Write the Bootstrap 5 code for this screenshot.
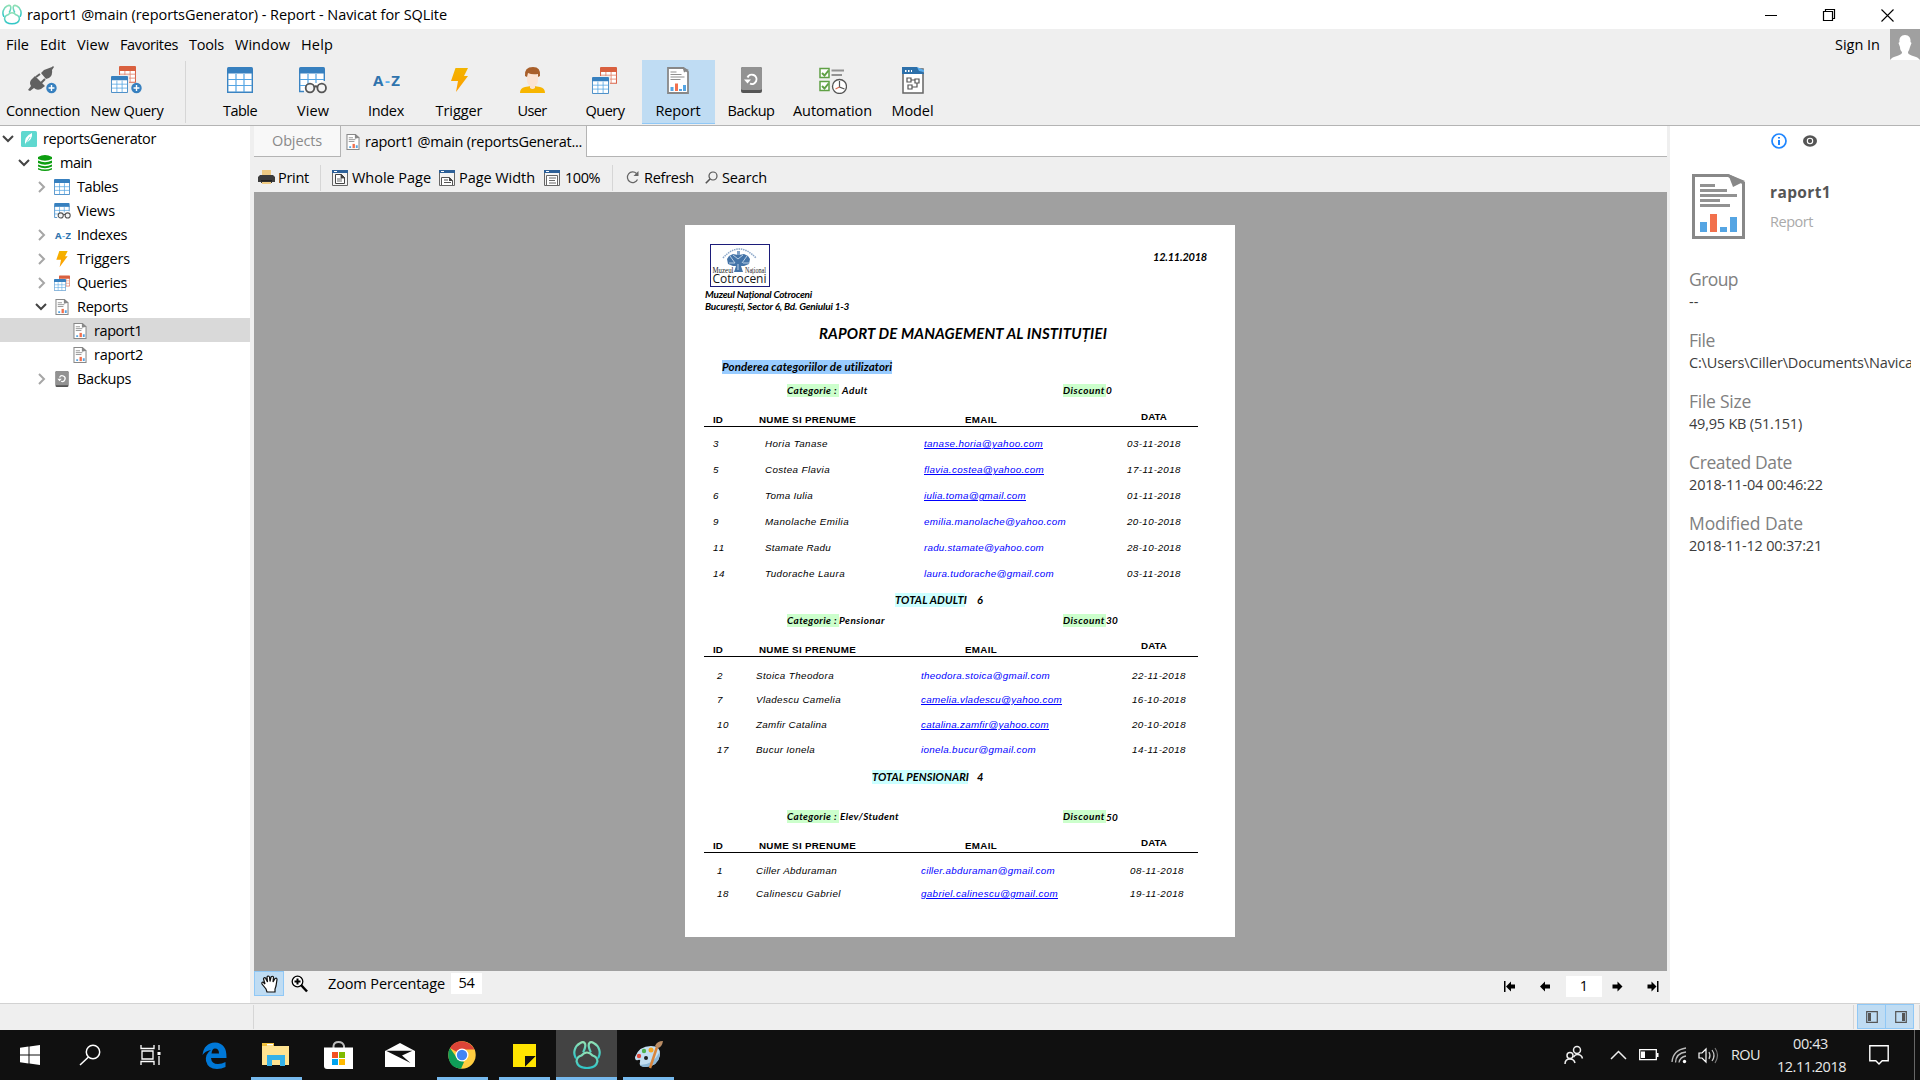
<!DOCTYPE html>
<html lang="ro">
<head>
<meta charset="utf-8">
<title>raport1 @main (reportsGenerator) - Report - Navicat for SQLite</title>
<link href="https://cdn.jsdelivr.net/npm/bootstrap@5.3.0/dist/css/bootstrap.min.css" rel="stylesheet">
<style>
body{width:1920px;height:1080px;overflow:hidden;background:#efefef;color:#000;font-family:"Open Sans","Noto Sans",sans-serif;font-size:14.5px;line-height:20px}
svg{display:block;flex:none}
[data-w]{display:inline-block;white-space:nowrap}
.title-bar{height:29px;background:#fff}
.menu-bar{height:31px}
.avatar-box{width:30px;height:31px;background:#a0a0a0}
.tool-bar{height:66px;border-bottom:1px solid #b4b4b4}
.tool{width:73px;height:64px;padding-top:4px;display:flex;flex-direction:column;align-items:center}
.tool .ico{height:32px;display:flex;align-items:center;justify-content:center;margin-left:-1px}
.tool .lbl{margin-top:5px;margin-left:-1px}
.tool.active{background:#bfdcf3;border-bottom:1px solid #90c8f6}
.vsep{width:1px;background:#d6d6d6;flex:none}
.work{height:877px}
.tree{width:250px;background:#fff;margin-right:4px;flex:none}
.tree-row{height:24px;display:grid;align-items:center}
.tree-row>*{position:relative;top:.6px}
.lv1{grid-template-columns:2px 19px 22px auto}
.lv2{grid-template-columns:18px 20px 22px auto}
.lv3{grid-template-columns:35px 19px 23px auto}
.lv4{grid-template-columns:36px 37px 21px auto}
.tree-row.sel{background:#d9d9d9}
.center-pane{width:1413px;margin-right:3px;flex:none}
.tab-strip{height:31px;background:#fff}
.tab-a{width:87px;background:#f8f8f8;color:#8a8a8a;border-right:1px solid #b4b4b4;border-bottom:1px solid #b4b4b4}
.tab-b{width:246px;background:#efefef;border-right:1px solid #b4b4b4;padding-left:5px}
.tab-rest{border-bottom:1px solid #b4b4b4}
.rep-bar{height:35px}
.canvas-area{height:779px;background:#a0a0a0;padding:33px 0 0 431px}
.view-bar{height:32px}
.view-bar .fld{background:#fff;height:21px;text-align:center}
.hand-btn{width:30px;height:25px;background:#bfdcf3;border:1px solid #90c8f6}
.info{background:#fff;padding-left:19px;overflow:hidden;width:250px}
.info .cap{font-size:17.5px;line-height:24px;height:24px;color:#808080}
.info .val{line-height:22px;height:22px;color:#3c3c3c;margin-bottom:15px;width:222px;overflow:hidden}
.status{height:27px;border-top:1px solid #d2d2d2}
.pbtn{width:29px;height:25px;background:#bfdcf3;border:1px solid #90c8f6}
/* report sheet */
.sheet{width:550px;height:712px;background:#fff;padding:19px 0 0 19px;line-height:13px;font-family:Lato,sans-serif;font-weight:700;font-style:italic;font-size:10px}
.logo-frame{width:60px;height:43px;border:1px solid #1c1c7a}
.cat{display:grid;grid-template-columns:83px 276px auto;height:13px}
.hl-g{background:#cfc;display:inline-block;width:52px;height:13px;white-space:nowrap;overflow:visible}
.hl-d{width:43px}
.hl-c{background:#cff;display:inline-block;height:14px;line-height:14px;white-space:nowrap}
.hl-b{background:#9cf;display:inline-block;height:14px;line-height:14px}
.hd{display:grid;grid-template-columns:9px 46px 206px 176px auto;width:494px;border-bottom:1px solid #000;font:700 9.8px/12px "Liberation Sans",sans-serif;height:13px;margin-top:17px}
.hd .dt{margin-top:-3px}
.rw{display:grid;grid-template-columns:9px 52px 159px 203px auto;font:italic 400 9.8px/26px "Liberation Sans",sans-serif;height:26px;color:#000}
.rw.b{grid-template-columns:13px 39px 165px 211px auto}
.rw.c{grid-template-columns:13px 39px 165px 209px auto}
.rw em{color:#00f}
.rw em.u{text-decoration:underline}
.task-bar{height:50px;background:#101010;color:#e8e8e8}
.tk{width:62px;height:50px;display:flex;align-items:center;justify-content:center;position:relative}
.tk.run::after{content:"";position:absolute;left:6px;right:5px;bottom:0;height:3px;background:#76b9ed}
.tk.cur{background:#434343;width:61px;margin-left:1px}
.tk.cur::after{left:0;right:0}
.tray{display:grid;grid-template-columns:46px 29px 32px 27px 33px 46px 92px 45px 6px;align-items:center;width:356px}
</style>
<script src="https://cdn.jsdelivr.net/npm/bootstrap@5.3.0/dist/js/bootstrap.bundle.min.js"></script>
</head>
<body>
<svg width="0" height="0" class="position-absolute">
<defs>
<linearGradient id="teal" x1="0" y1="0" x2="0" y2="1"><stop offset="0" stop-color="#8fe0b4"/><stop offset="1" stop-color="#2fc6c8"/></linearGradient>
<linearGradient id="amber" x1="0" y1="0" x2="0" y2="1"><stop offset="0" stop-color="#f2b400"/><stop offset="1" stop-color="#ff9d00"/></linearGradient>
</defs>
<symbol id="table" viewBox="0 0 26 26"><path d="M.7 5h24.6v20.2H.7z" fill="#fff" stroke="#3b84c2" stroke-width="1.4"/><path d="M9 7v18M17 7v18M1 12.500h24M1 18.500h24" stroke="#55a5e3" stroke-width="1.200" fill="none"/><path d="M0 1.500Q0 0 1.500 0h23Q26 0 26 1.500V6.500H0z" fill="#3780bf"/></symbol>
<symbol id="tableRed" viewBox="0 0 26 26"><path d="M.8 5h24.400v20H.8z" fill="#fff" stroke="#d9644a" stroke-width="1.600"/><path d="M9 7v18M17 7v18M1 12.500h24M1 18.500h24" stroke="#e58a74" stroke-width="1.400"/><path d="M0 1.500Q0 0 1.500 0h23Q26 0 26 1.500V7.500H0z" fill="#d9603f"/></symbol>
<symbol id="view" viewBox="0 0 28 27"><path d="M5 24.500H.7V5h24.600V14" fill="#fff" stroke="#3b84c2" stroke-width="1.400"/><path d="M9 7v11M17 7v9M1 12.500h24M1 18.500h6" stroke="#55a5e3" stroke-width="1.200"/><path d="M0 1.500Q0 0 1.500 0h23Q26 0 26 1.500V6.500H0z" fill="#3780bf"/><g fill="#f4f4f4" stroke="#555" stroke-width="1.800"><circle cx="11" cy="21" r="4.300"/><circle cx="22.700" cy="21" r="4.300"/><path d="M15.300 20q1.500-1.500 3 0" fill="none"/></g></symbol>
<symbol id="query" viewBox="0 0 26 27"><use href="#tableRed" x="8" y="0" width="17" height="17"/><path d="M0 9h18v18H0z" fill="#efefef"/><use href="#table" x="0" y="10" width="17" height="17"/></symbol>
<symbol id="report" viewBox="0 0 22 27"><path d="M1 1h15.500L21 5v21H1z" fill="#fff" stroke="#888" stroke-width="1.800"/><path d="M15.500 0L22 3l-5 2.500z" fill="#888"/><path d="M3.500 5h6M3.500 7.500h11M3.500 10h14M3.500 12.500h10" stroke="#909090" stroke-width="1.100"/><path d="M3.500 20h3v4h-3zM12 22h3v2h-3zM16 18h3v6h-3z" fill="#55a5e3"/><path d="M8 16.500h3V24H8z" fill="#f2704c"/></symbol>
<symbol id="reportS" viewBox="0 0 14 17"><path d="M.6.600h9L13.400 4v12.400H.6z" fill="#fff" stroke="#888" stroke-width="1.100"/><path d="M9 0v5l5-1z" fill="#888"/><path d="M2.500 4h4.500M2.500 6h7M2.500 8h6" stroke="#888" stroke-width=".9"/><path d="M3 13h2v2H3zM10 12h2v3h-2z" fill="#55a5e3"/><path d="M6.500 10.500H9V15H6.500z" fill="#f2704c"/></symbol>
<symbol id="backup" viewBox="0 0 21 26"><path d="M0 2Q0 0 2 0h17q2 0 2 2v22q0 2-2 2H2q-2 0-2-2z" fill="#555"/><path d="M0 2Q0 0 2 0h17q2 0 2 2v20q0 1-2 1H2q-2 0-2-1z" fill="#929292"/><path d="M6.500 10.500A4.700 4.700 0 1 1 9 16.700" fill="none" stroke="#fff" stroke-width="2"/><path d="M3 12.500h7l-3.500 4z" fill="#fff"/></symbol>
<symbol id="bolt" viewBox="0 0 17 24"><path d="M4.500 0H17l-4 8h4L5 24l2-11H0z" fill="url(#amber)"/></symbol>
<symbol id="down" viewBox="0 0 12 8"><path d="M1 1l5 5 5-5" fill="none" stroke="#444" stroke-width="2"/></symbol>
<symbol id="right" viewBox="0 0 12 12"><path d="M4 1l5 5-5 5" fill="none" stroke="#a6a6a6" stroke-width="2"/></symbol>
<symbol id="plus" viewBox="0 0 12 12"><circle cx="6" cy="6" r="5.700" fill="#3780bf"/><path d="M6 2.800v6.400M2.800 6h6.400" stroke="#fff" stroke-width="1.500"/></symbol>
<symbol id="paw" viewBox="0 0 28 28"><g fill="none" stroke="url(#teal)" stroke-width="2.200" stroke-linecap="round"><path d="M8.500 14.500Q3.500 16 3.600 20.500 5 27 14 27t10.400-6.500Q24.500 16 19.500 14.500 17 11.500 14 11.500T8.500 14.500z"/><path d="M2.500 16.500C0 12 1.500 5 7 2.200 11.500-.3 13 2.500 12 6.500q-.4 2-1.500 4M25.500 16.500C28 12 26.500 5 21 2.200 16.500-.3 15 2.500 16 6.500q.4 2 1.500 4"/></g></symbol>
</svg>

<header class="title-bar d-flex align-items-center">
  <svg width="20" height="21" style="margin:0 5px 0 2px"><use href="#paw" width="20" height="21"/></svg>
  <span data-w="420">raport1 @main (reportsGenerator) - Report - Navicat for SQLite</span>
  <div class="d-flex ms-auto align-items-center" style="padding-right:26px;gap:44px">
    <svg width="14" height="14"><path d="M1 7.500h12" stroke="#000"/></svg>
    <svg width="14" height="14"><path d="M1.500 3.500h9v9h-9zM3.500 3.500v-2h9v9h-2" fill="none" stroke="#000" stroke-width="1.200"/></svg>
    <svg width="14" height="14"><path d="M1.500 1.500l12 12M13.500 1.500l-12 12" stroke="#000" stroke-width="1.100"/></svg>
  </div>
</header>

<nav class="menu-bar d-flex align-items-center">
  <div class="d-flex" style="gap:11px;padding-left:6px"><span data-w="23">File</span><span data-w="26">Edit</span><span data-w="32">View</span><span data-w="58">Favorites</span><span data-w="35">Tools</span><span data-w="55">Window</span><span data-w="32">Help</span></div>
  <span class="ms-auto" data-w="45">Sign In</span>
  <div class="avatar-box" style="margin-left:10px"><svg width="30" height="31"><path d="M15 6c4 0 6 3 5.500 7l1 1-1.500 4q-1 4-2 5c0 2 1 2.500 5 4q5 1 7 4H0q2-3 7-4c4-1.500 5-2 5-4-1-1-2-2-2-5l-1.500-4 1-1C9 9 11 6 15 6z" fill="#fff"/></svg></div>
</nav>

<section class="tool-bar d-flex">
  <div class="tool" style="width:87px"><div class="ico"><svg width="32" height="28" viewBox="0 0 32 28"><g fill="#606060"><path d="M17 4l8-3 1-1 1 1-2 3q1 5-3 8l-3 1-5-6z"/><path d="M4 14l4-4 10 10-4 3q-4 2-7-1l-4 3-2-1 3-4q-2-3 0-6z"/></g><path d="M9 11l4-3M14 17l4-4" stroke="#606060" stroke-width="2"/><use href="#plus" x="19" y="16" width="11" height="12"/></svg></div><span class="lbl" data-w="74">Connection</span></div>
  <div class="tool" style="width:81px"><div class="ico"><svg width="32" height="28"><use href="#query" width="26" height="27"/><use href="#plus" x="20" y="16" width="11" height="12"/></svg></div><span class="lbl" data-w="73">New Query</span></div>
  <div class="vsep" style="margin:1px 18px 2px 17px"></div>
  <div class="tool"><div class="ico"><svg width="26" height="26"><use href="#table"/></svg></div><span class="lbl" data-w="34">Table</span></div>
  <div class="tool"><div class="ico"><svg width="28" height="27"><use href="#view"/></svg></div><span class="lbl" data-w="32">View</span></div>
  <div class="tool"><div class="ico"><svg width="27" height="26"><text x="0" y="19" font-family="Noto Sans" font-weight="700" font-size="15" textLength="27" fill="#2f73ad">A<tspan fill="#5ab0ee">-</tspan>Z</text></svg></div><span class="lbl" data-w="36">Index</span></div>
  <div class="tool"><div class="ico"><svg width="17" height="24"><use href="#bolt"/></svg></div><span class="lbl" data-w="47">Trigger</span></div>
  <div class="tool"><div class="ico"><svg width="25" height="27"><path d="M0 26q0-5 5-6l6-1h3l6 1q5 1 5 6z" fill="#f7b500"/><path d="M7 6h11v7q0 4-3 6v2q-2.500 2-5 0v-2q-3-2-3-6z" fill="#fbe3d2"/><path d="M5 9Q4 0 13 0q8 0 7 9l-2 1V7Q12 8 8 6l-1 4z" fill="#a85f2a"/></svg></div><span class="lbl" data-w="29">User</span></div>
  <div class="tool"><div class="ico"><svg width="26" height="27"><use href="#query"/></svg></div><span class="lbl" data-w="39">Query</span></div>
  <div class="tool active"><div class="ico"><svg width="22" height="27"><use href="#report"/></svg></div><span class="lbl" data-w="45">Report</span></div>
  <div class="tool"><div class="ico"><svg width="21" height="26"><use href="#backup"/></svg></div><span class="lbl" data-w="47">Backup</span></div>
  <div class="tool" style="width:90px"><div class="ico"><svg width="28" height="27" viewBox="0 0 28 27"><g fill="#fff" stroke="#5fa044" stroke-width="1.500"><path d="M1 1.500h9v9H1zM1 14.500h9v9H1z"/><path d="M3 6l2.500 2.500 4-5M3 19l2.500 2.500 4-5" fill="none" stroke-width="2"/></g><path d="M12.500 3.500H25M12.500 8H23" stroke="#929292" stroke-width="2"/><circle cx="20.500" cy="19.500" r="7" fill="#fff" stroke="#555" stroke-width="1.300"/><path d="M20.500 14v6l5 2" fill="none" stroke="#555" stroke-width="1.200"/><path d="M20.500 20l-4 2" stroke="#e06a50" stroke-width="1.200"/></svg></div><span class="lbl" data-w="79">Automation</span></div>
  <div class="tool" style="width:70px"><div class="ico"><svg width="22" height="27"><path d="M1 2h20v24H1z" fill="#fff" stroke="#666" stroke-width="1.500"/><path d="M0 0h15l7 6v1H0z" fill="#2d70aa"/><path d="M15 0l7 3v2l-5-1z" fill="#5aaeef"/><path d="M3 4h1.500M6 4h1.500M9 4h1" stroke="#fff" stroke-width="2"/><path d="M5 11h4v4H5zM13 12h4v4h-4zM6 18h4v4H6zM9 13h4M15 16v4h-5" fill="none" stroke="#555" stroke-width="1.200"/></svg></div><span class="lbl" data-w="42">Model</span></div>
</section>

<main class="work d-flex">
  <aside class="tree">
    <div class="tree-row lv1"><i></i><svg width="12" height="8"><use href="#down"/></svg><svg width="16" height="16"><rect width="16" height="16" rx="1.500" fill="#5fd8cf"/><path d="M4 14Q3 5 11 2q1 6-6 10" fill="#fff"/><path d="M4 14l5-8" stroke="#5fd8cf" stroke-width=".8"/></svg><span data-w="113">reportsGenerator</span></div>
    <div class="tree-row lv2"><i></i><svg width="12" height="8"><use href="#down"/></svg><svg width="14" height="16"><g fill="#0d9e10"><path d="M0 2q7-4 14 0v2q-7 3.500-14 0zM0 5.500q7 3.500 14 0v2.600q-7 3.500-14 0zM0 9.500q7 3.500 14 0v2q-7 3.500-14 0zM0 13q7 3.200 14 0v1.500q-7 3-14 0z"/></g></svg><span data-w="32">main</span></div>
    <div class="tree-row lv3"><i></i><svg width="12" height="12"><use href="#right"/></svg><svg width="16" height="16"><use href="#table"/></svg><span data-w="41">Tables</span></div>
    <div class="tree-row lv3"><i></i><i></i><svg width="17" height="16"><use href="#view"/></svg><span data-w="38">Views</span></div>
    <div class="tree-row lv3"><i></i><svg width="12" height="12"><use href="#right"/></svg><svg width="17" height="16"><text x="1" y="12" font-family="Noto Sans" font-weight="700" font-size="9.500" textLength="16" fill="#2f73ad">A<tspan fill="#5ab0ee">-</tspan>Z</text></svg><span data-w="50">Indexes</span></div>
    <div class="tree-row lv3"><i></i><svg width="12" height="12"><use href="#right"/></svg><svg width="16" height="16"><use href="#bolt"/></svg><span data-w="53">Triggers</span></div>
    <div class="tree-row lv3"><i></i><svg width="12" height="12"><use href="#right"/></svg><svg width="16" height="16"><use href="#tableRed" x="5" width="11" height="12"/><use href="#table" y="4" width="12" height="12"/></svg><span data-w="50">Queries</span></div>
    <div class="tree-row lv3"><i></i><svg width="12" height="8"><use href="#down"/></svg><svg width="16" height="16"><use href="#reportS"/></svg><span data-w="51">Reports</span></div>
    <div class="tree-row lv4 sel"><i></i><i></i><svg width="14" height="16"><use href="#reportS"/></svg><span data-w="48">raport1</span></div>
    <div class="tree-row lv4"><i></i><i></i><svg width="14" height="16"><use href="#reportS"/></svg><span data-w="49">raport2</span></div>
    <div class="tree-row lv3"><i></i><svg width="12" height="12"><use href="#right"/></svg><svg width="16" height="16"><use href="#backup"/></svg><span data-w="54">Backups</span></div>
  </aside>

  <section class="center-pane">
    <div class="tab-strip d-flex">
      <div class="tab-a d-flex align-items-center justify-content-center"><span data-w="50">Objects</span></div>
      <div class="tab-b d-flex align-items-center"><svg width="14" height="16" style="margin-right:5px"><use href="#reportS"/></svg><span data-w="217">raport1 @main (reportsGenerat...</span></div>
      <div class="tab-rest flex-grow-1"></div>
    </div>
    <div class="rep-bar d-flex align-items-center" style="padding:6px 0 0 4px">
      <svg width="17" height="15"><path d="M4 0h9v6H4z" fill="#efcb84"/><path d="M2 5h13l2 2v5h-3v1H3v-1H0V7z" fill="#3c3c3c"/><path d="M4 12h9v2H4z" fill="#efcb84"/><path d="M3 10h11v1.500H3z" fill="#222"/></svg><span style="margin-left:3px" data-w="31">Print</span>
      <div class="vsep" style="height:26px;margin:0 11px"></div>
      <svg width="16" height="16"><path d="M.5 2.500h15v13H.5z" fill="#f4f4f4" stroke="#666"/><path d="M0 0h16v3H0z" fill="#2d6098"/><path d="M2 1.500h3" stroke="#fff"/><path d="M3.500 4.500h6l3 3v6h-9z" fill="#fff" stroke="#444"/><path d="M9 4v4h4zM5 9h5M5 11h5" fill="#444" stroke="#444" stroke-width=".8"/></svg><span style="margin:0 8px 0 4px" data-w="79">Whole Page</span>
      <svg width="16" height="16"><path d="M.5 2.500h15v13H.5z" fill="#f4f4f4" stroke="#666"/><path d="M0 0h16v3H0z" fill="#2d6098"/><path d="M2 1.500h3" stroke="#fff"/><path d="M2.500 15V7.500h8l3 3V15M5 10h4M5 12.500h7" fill="#fff" stroke="#555"/><path d="M10 7v4h4z" fill="#444"/></svg><span style="margin:0 9px 0 4px" data-w="76">Page Width</span>
      <svg width="16" height="16"><path d="M.5 2.500h15v13H.5z" fill="#f4f4f4" stroke="#666"/><path d="M0 0h16v3H0z" fill="#2d6098"/><path d="M2 1.500h3" stroke="#fff"/><path d="M2.500 15V5.500h11V15M5 8h7M5 10.500h6M5 13h7" fill="#fff" stroke="#666"/></svg><span style="margin-left:5px" data-w="35">100%</span>
      <div class="vsep" style="height:26px;margin:0 13px 0 12px"></div>
      <svg width="13" height="13"><path d="M11.500 8.500A5.300 5.300 0 1 1 10.500 2.500" fill="none" stroke="#666" stroke-width="1.200"/><path d="M12.500 0v5H7.500z" fill="#666"/></svg><span style="margin:0 11px 0 5px" data-w="50">Refresh</span>
      <svg width="13" height="13"><circle cx="8" cy="5" r="4" fill="none" stroke="#555" stroke-width="1.200"/><path d="M5 8L.8 12.300" stroke="#555" stroke-width="1.600"/></svg><span style="margin-left:4px" data-w="45">Search</span>
    </div>

    <div class="canvas-area">
      <article class="sheet">
        <div class="d-flex"><div class="logo-frame" style="margin-left:6px"><svg width="58" height="41" viewBox="1 1 58 41" font-style="normal" font-weight="400"><path d="M13 14Q29 -4 46 14" fill="none" stroke="#8aa6c8" stroke-width="1.500" stroke-dasharray="1.500 .8"/><path d="M28 11l-5-1-4 2-2 3 1 5 5 2h3l-2 6h9l-2-6h3l5-2 1-5-2-3-4-2-5 1z" fill="#4474a8"/><path d="M20 12l5 7M37 12l-5 7M23 11l5 4 5-4M19 19h6M33 19h6M28 20v6" stroke="#c6d8ea" stroke-width=".9" fill="none"/><path d="M27 7h3v4h-3z" fill="#7c9fc6"/><text x="2.500" y="28.500" font-family="Liberation Serif" font-size="7.500" textLength="21" lengthAdjust="spacingAndGlyphs" fill="#222">Muzeul</text><text x="35" y="28.500" font-family="Liberation Serif" font-size="7.500" textLength="21" lengthAdjust="spacingAndGlyphs" fill="#222">Național</text><text x="2.500" y="38.500" font-family="Open Sans" font-size="12.500" textLength="54" lengthAdjust="spacingAndGlyphs" fill="#161616">Cotroceni</text></svg></div><span style="margin:6px 0 0 383px;font-size:11px" data-w="54">12.11.2018</span></div>
        <div style="margin:1px 0 0 1px;line-height:12px"><span data-w="107">Muzeul Național Cotroceni</span><br><span data-w="144">București, Sector 6, Bd. Geniului 1-3</span></div>
        <div style="margin:12px 0 0 115px;font-size:15px;line-height:18px"><span data-w="288">RAPORT DE MANAGEMENT AL INSTITUȚIEI</span></div>
        <div style="margin:18px 0 0 18px;height:14px;font-size:11.500px"><span class="hl-b" data-w="170">Ponderea categoriilor de utilizatori</span></div>
        <div class="cat" style="margin-top:10px"><i></i><div><span class="hl-g"><span data-w="50">Categorie :</span></span><span style="margin-left:3px" data-w="26">Adult</span></div><div><span class="hl-g hl-d"><span data-w="42">Discount</span></span><span data-w="5">0</span></div></div>
        <div class="hd"><i></i><span data-w="10">ID</span><span data-w="97">NUME SI PRENUME</span><span data-w="32">EMAIL</span><span class="dt" data-w="26">DATA</span></div>
        <div style="margin-top:4px">
          <div class="rw"><i></i><span>3</span><span data-w="63">Horia Tanase</span><em class="u" data-w="119">tanase.horia@yahoo.com</em><span data-w="54">03-11-2018</span></div>
          <div class="rw"><i></i><span>5</span><span data-w="65">Costea Flavia</span><em class="u" data-w="120">flavia.costea@yahoo.com</em><span data-w="54">17-11-2018</span></div>
          <div class="rw"><i></i><span>6</span><span data-w="48">Toma Iulia</span><em class="u" data-w="102">iulia.toma@gmail.com</em><span data-w="54">01-11-2018</span></div>
          <div class="rw"><i></i><span>9</span><span data-w="84">Manolache Emilia</span><em data-w="142">emilia.manolache@yahoo.com</em><span data-w="54">20-10-2018</span></div>
          <div class="rw"><i></i><span data-w="12">11</span><span data-w="66">Stamate Radu</span><em data-w="120">radu.stamate@yahoo.com</em><span data-w="54">28-10-2018</span></div>
          <div class="rw"><i></i><span data-w="12">14</span><span data-w="80">Tudorache Laura</span><em data-w="130">laura.tudorache@gmail.com</em><span data-w="54">03-11-2018</span></div>
        </div>
        <div class="d-flex" style="margin:6px 0 0 191px;font-size:11px;line-height:14px;height:14px"><span class="hl-c" style="width:70px"><span data-w="72">TOTAL ADULTI</span></span><span style="margin-left:12px">6</span></div>
        <div class="cat" style="margin-top:7px"><i></i><div><span class="hl-g"><span data-w="50">Categorie :</span></span><span data-w="46">Pensionar</span></div><div><span class="hl-g hl-d"><span data-w="42">Discount</span></span><span data-w="12">30</span></div></div>
        <div class="hd"><i></i><span data-w="10">ID</span><span data-w="97">NUME SI PRENUME</span><span data-w="32">EMAIL</span><span class="dt" style="margin-top:-4px" data-w="26">DATA</span></div>
        <div style="margin-top:6px">
          <div class="rw b" style="height:24px"><i></i><span>2</span><span data-w="78">Stoica Theodora</span><em data-w="129">theodora.stoica@gmail.com</em><span data-w="54">22-11-2018</span></div>
          <div class="rw b" style="height:25px"><i></i><span>7</span><span data-w="85">Vladescu Camelia</span><em class="u" data-w="141">camelia.vladescu@yahoo.com</em><span data-w="54">16-10-2018</span></div>
          <div class="rw b" style="height:25px"><i></i><span data-w="12">10</span><span data-w="71">Zamfir Catalina</span><em class="u" data-w="128">catalina.zamfir@yahoo.com</em><span data-w="54">20-10-2018</span></div>
          <div class="rw b" style="height:25px"><i></i><span data-w="12">17</span><span data-w="59">Bucur Ionela</span><em data-w="115">ionela.bucur@gmail.com</em><span data-w="54">14-11-2018</span></div>
        </div>
        <div class="d-flex" style="margin:8px 0 0 168px;font-size:11px;line-height:14px;height:14px"><span class="hl-c" style="width:96px"><span data-w="97">TOTAL PENSIONARI</span></span><span style="margin-left:9px">4</span></div>
        <div class="cat" style="margin-top:26px"><i></i><div><span class="hl-g"><span data-w="50">Categorie :</span></span><span style="margin-left:1px" data-w="59">Elev/Student</span></div><div><span class="hl-g hl-d"><span data-w="42">Discount</span></span><span class="position-relative" style="top:1px" data-w="12">50</span></div></div>
        <div class="hd"><i></i><span data-w="10">ID</span><span data-w="97">NUME SI PRENUME</span><span data-w="32">EMAIL</span><span class="dt" data-w="26">DATA</span></div>
        <div style="margin-top:5px">
          <div class="rw c" style="height:23px"><i></i><span>1</span><span data-w="81">Ciller Abduraman</span><em data-w="134">ciller.abduraman@gmail.com</em><span data-w="54">08-11-2018</span></div>
          <div class="rw c"><i></i><span data-w="12">18</span><span data-w="85">Calinescu Gabriel</span><em class="u" data-w="137">gabriel.calinescu@gmail.com</em><span data-w="54">19-11-2018</span></div>
        </div>
      </article>
    </div>

    <div class="view-bar d-flex align-items-start">
      <div class="hand-btn d-flex align-items-center justify-content-center" style="padding-left:2px"><svg width="18" height="18" viewBox="0 0 18 18"><path d="M6 17l-1-3-4-5q-.5-2 1-2l2 2-1.500-5q.5-2 2-1L6.500 7 6 2q1-2 2.500 0L9 6.500 10 2q1.500-1.500 2.500 0L12 7l2-3.500q2-1 2 1L15 11l-1 3v3z" fill="#fff" stroke="#111" stroke-width="1.200"/></svg></div>
      <svg width="17" height="18" style="margin:4px 20px 0 7px"><circle cx="6.500" cy="6.500" r="5.300" fill="#fff" stroke="#000" stroke-width="1.300"/><path d="M3.500 6.500h6M6.500 3.500v6" stroke="#000" stroke-width="2"/><path d="M10 10l6 6.500" stroke="#000" stroke-width="2.500"/></svg>
      <span style="margin:3px 6px 0 0" data-w="117">Zoom Percentage</span>
      <div class="fld" style="width:31px;margin-top:2px"><span data-w="16">54</span></div>
      <div class="d-flex ms-auto align-items-center" style="padding:5px 8px 0 0">
        <svg width="12" height="11" style="margin-right:24px"><path d="M0 0h1.500v11H0zM2 5.500L7 .5V3.500h4v4H7v3z"/></svg>
        <svg width="11" height="11" style="margin-right:15px"><path d="M0 5.500L5 .5v3h5v4H5v3z"/></svg>
        <div class="fld" style="width:36px">1</div>
        <svg width="11" height="11" style="margin:0 24px 0 10px"><path d="M10.500 5.500l-5-5v3h-5v4h5v3z"/></svg>
        <svg width="12" height="11"><path d="M10 0h1.500v11H10zM9.500 5.500l-5-5v3h-4v4h4v3z"/></svg>
      </div>
    </div>
  </section>

  <aside class="info">
    <div class="d-flex align-items-center" style="padding:7px 0 0 82px;gap:16px">
      <svg width="16" height="16"><circle cx="8" cy="8" r="7" fill="#fff" stroke="#1f86ff" stroke-width="1.700"/><path d="M7 4h2v1.600H7zM7 7h2v5H7z" fill="#1f86ff"/></svg>
      <svg width="14" height="12"><ellipse cx="7" cy="6" rx="7" ry="5.800" fill="#555"/><circle cx="7" cy="6" r="2.700" fill="none" stroke="#fff" stroke-width="1.100"/></svg>
    </div>
    <div class="d-flex" style="padding:25px 0 0 3px">
      <svg width="53" height="65"><path d="M1.500 1.500H36L51.500 9v54.500h-50z" fill="#fff" stroke="#888" stroke-width="3"/><path d="M36 0l17 7-12 6z" fill="#888"/><path d="M8 11.500h15M8 16.500h27M8 21.500h37M8 26.500h20M8 31.500h30" stroke="#929292" stroke-width="3"/><path d="M8 48h7v10H8zM28 53h7v5h-7zM38 43h7v15h-7z" fill="#55a5e3"/><path d="M18 40h7v18h-7z" fill="#f2704c"/></svg>
      <div style="padding:8px 0 0 25px"><div><b data-w="61" style="font-size:15.500px;color:#555">raport1</b></div><div style="margin-top:9px;color:#aaa"><span data-w="43">Report</span></div></div>
    </div>
    <div style="padding-top:28px">
      <div class="cap"><span data-w="49">Group</span></div><div class="val">--</div>
      <div class="cap"><span data-w="26">File</span></div><div class="val"><span data-w="234">C:\Users\Ciller\Documents\Navicat\</span></div>
      <div class="cap"><span data-w="62">File Size</span></div><div class="val"><span data-w="113">49,95 KB (51.151)</span></div>
      <div class="cap"><span data-w="103">Created Date</span></div><div class="val"><span data-w="134">2018-11-04 00:46:22</span></div>
      <div class="cap"><span data-w="114">Modified Date</span></div><div class="val"><span data-w="133">2018-11-12 00:37:21</span></div>
    </div>
  </aside>
</main>

<div class="status d-flex">
  <div class="vsep" style="margin:1px 0 1px 253px"></div>
  <div class="vsep ms-auto" style="margin:1px 3px 1px 0"></div>
  <div class="pbtn d-flex align-items-center justify-content-center"><svg width="12" height="12"><path d="M.7.700h10.600v10.600H.7z" fill="none" stroke="#555" stroke-width="1.200"/><path d="M2 2h3v8H2z" fill="#555"/></svg></div>
  <div class="pbtn d-flex align-items-center justify-content-center" style="margin-left:-1px"><svg width="12" height="12" style="margin-left:2px"><path d="M.7.700h10.600v10.600H.7z" fill="none" stroke="#555" stroke-width="1.200"/><path d="M7 2h3v8H7z" fill="#555"/></svg></div>
  <div class="vsep" style="margin:1px 0 1px 5px"></div>
</div>

<footer class="task-bar d-flex">
  <div class="tk" style="width:60px"><svg width="20" height="20"><path d="M0 2.800L8.500 1.600V9.500H0zM9.500 1.500L20 0v9.500H9.500zM0 10.500h8.500v8L0 17.300zM9.500 10.500H20V20L9.500 18.600z" fill="#fff"/></svg></div>
  <div class="tk" style="width:60px"><svg width="22" height="22"><circle cx="14" cy="8" r="6.700" fill="none" stroke="#fff" stroke-width="1.500"/><path d="M9.500 13L1 21" stroke="#fff" stroke-width="1.500"/></svg></div>
  <div class="tk" style="width:63px;padding-right:2px"><svg width="22" height="20"><path d="M1 0v3.500h13V0M1 20v-3.500h13V20M2 6h11v8H2zM19 0v5M19 11v9" fill="none" stroke="#fff" stroke-width="1.300"/><path d="M17.500 7h3v3h-3z" fill="#fff"/></svg></div>
  <div class="tk"><svg width="25" height="27"><path d="M.5 13Q2 1 13 .5 25 1 24.500 16H9q.5 6 7 6 4 0 7.500-2v5q-4 2-8.500 2-9 0-11-8-1-7 5-11Q3 9 .500 13zM9.500 11.500H17q0-5-4-5-3 0-3.500 5z" fill="#0078d7"/></svg></div>
  <div class="tk run"><svg width="28" height="24"><path d="M0 0h12v3h15v19H0z" fill="#ffe391"/><path d="M0 0h12v3H0z" fill="#f0c13c"/><path d="M5 1h6v1.500H5z" fill="#fff"/><path d="M5 23V12h18v11h-5v-6h-8v6z" fill="#35b1e8"/></svg></div>
  <div class="tk"><svg width="29" height="28"><path d="M9.500 8V5Q10 1 14.500 1T20 5v3" fill="none" stroke="#bbb" stroke-width="2"/><path d="M0 6.500h29V28H3Q0 28 0 25z" fill="#fff"/><path d="M8 11h6v6H8z" fill="#f25022"/><path d="M15 11h6v6h-6z" fill="#7fba00"/><path d="M8 18h6v6H8z" fill="#00a4ef"/><path d="M15 18h6v6h-6z" fill="#ffb900"/></svg></div>
  <div class="tk"><svg width="30" height="24"><path d="M0 8L15 0l15 8v16H0z" fill="#fff"/><path d="M1 7.800h26.500L17 12.500 25.500 20z" fill="#101010"/></svg></div>
  <div class="tk run"><svg width="28" height="28" viewBox="0 0 28 28"><circle cx="14" cy="14" r="13.700" fill="#ffcd40"/><path d="M14 14L2 7Q6 0 14 .3T26.500 8.500H14z" fill="#db4437"/><path d="M2 7l7 10 7 4-3 6.700Q1 27 .3 14 0 10 2 7z" fill="#0f9d58"/><circle cx="14" cy="14" r="6.500" fill="#fff"/><circle cx="14" cy="14" r="5.200" fill="#4285f4"/></svg></div>
  <div class="tk run"><svg width="23" height="23"><path d="M0 0h23v23H0z" fill="#ffe400"/><path d="M12 12h11L12 23z" fill="#101010"/><path d="M23 12v11H12z" fill="#ffe400"/></svg></div>
  <div class="tk run cur"><svg width="28" height="28"><use href="#paw"/></svg></div>
  <div class="tk run"><svg width="30" height="28" viewBox="0 0 30 28"><path d="M2 16Q6 5 18 5q10 0 9 9-2 11-14 12-8-.5-6-5 1-3-2-2-3 1-3-3z" fill="#c3dff2"/><path d="M27 14q-2 11-14 12-5 0-6-2Q20 24 26 12z" fill="#8db8d8"/><circle cx="6" cy="15" r="2.200" fill="#e04a3c"/><circle cx="11" cy="10" r="2.200" fill="#4fb24f"/><circle cx="18" cy="9" r="2.500" fill="#f6a623"/><circle cx="13" cy="17" r="2" fill="#222"/><path d="M24 6l-7 21" stroke="#d9853b" stroke-width="2.500"/><path d="M22 5q2-5 8-5-1 6-5 7z" fill="#b98c64"/></svg></div>
  <div class="tray ms-auto">
    <svg width="20" height="20"><g fill="none" stroke="#eee" stroke-width="1.500"><circle cx="13" cy="5" r="3.500"/><circle cx="6" cy="10.500" r="3"/><path d="M1 19q0-5 5-5 4 0 5 4M9.500 12q2-3 4-2.500 4 0 5 4"/></g></svg>
    <svg width="17" height="10"><path d="M1 9l7.500-7.500L16 9" fill="none" stroke="#eee" stroke-width="1.500"/></svg>
    <svg width="20" height="12"><path d="M.7.700h16.600v10H.7z" fill="none" stroke="#fff" stroke-width="1.300"/><path d="M2 2.500h4v6.500H2zM18 4h1.500v4H18z" fill="#fff"/></svg>
    <svg width="16" height="17"><g fill="none" stroke="#bbb" stroke-width="1.300"><path d="M1 15Q2 3 15 1M4.500 15.500Q5 6 15 5M8 15.500Q9 10 15 9"/></g><circle cx="13.500" cy="14.500" r="1.700" fill="#fff"/></svg>
    <svg width="21" height="17"><path d="M1 6h3l4-4v13l-4-4H1z" fill="none" stroke="#fff" stroke-width="1.200"/><path d="M11 5q2 3.500 0 7M14 3q4 5.500 0 11" fill="none" stroke="#ccc" stroke-width="1.200"/><path d="M17 1q5 7 0 15" fill="none" stroke="#777" stroke-width="1.200"/></svg>
    <span data-w="29">ROU</span>
    <div class="d-flex flex-column align-items-start" style="line-height:23px"><span style="margin-left:16px" data-w="35">00:43</span><span data-w="69">12.11.2018</span></div>
    <svg width="20" height="21"><path d="M.8.800h18.400v15h-6L10 19l-3.200-3.200h-6z" fill="none" stroke="#fff" stroke-width="1.400"/></svg>
    <div style="height:50px;border-left:1px solid #666"></div>
  </div>
</footer>
<script>
// Tighten or widen tracking so that every label keeps its designed width.
document.querySelectorAll('[data-w]').forEach(function (el) {
  var r = document.createRange(); r.selectNodeContents(el);
  var natural = r.getBoundingClientRect().width, n = el.textContent.length;
  el.style.letterSpacing = ((+el.dataset.w - natural) / n).toFixed(3) + 'px';
});
</script>
</body>
</html>
